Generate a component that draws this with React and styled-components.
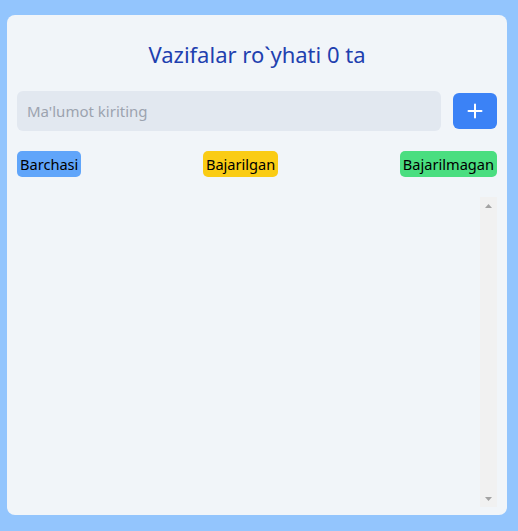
import React, { useState } from 'react';
import styled, { createGlobalStyle } from 'styled-components';

const GlobalStyle = createGlobalStyle`
  html, body {
    margin: 0;
    padding: 0;
    background: #93c5fd;
    font-family: "Noto Sans", "Open Sans", sans-serif;
  }
`;

const Page = styled.div`
  min-height: 531px;
  padding: 15px 11px 16px 7px;
  box-sizing: border-box;
`;

const Card = styled.div`
  background: #f1f5f9;
  border-radius: 8px;
  height: 500px;
  padding: 0 10px 8px 10px;
  box-sizing: border-box;
  display: flex;
  flex-direction: column;
`;

const Title = styled.h1`
  margin: 24px 0 22px;
  text-align: center;
  font-size: 22px;
  font-weight: 400;
  color: #1e40af;
  line-height: 30px;
`;

const InputRow = styled.form`
  display: flex;
  align-items: center;
  gap: 12px;
`;

const Input = styled.input`
  flex: 1;
  height: 40px;
  border: none;
  border-radius: 6px;
  background: #e2e8f0;
  padding: 0 10px;
  font-family: inherit;
  font-size: 15px;
  color: #1f2937;
  outline: none;
  &::placeholder {
    color: #9ca3af;
  }
`;

const AddButton = styled.button`
  width: 44px;
  height: 36px;
  border: none;
  border-radius: 6px;
  background: #3b82f6;
  display: flex;
  align-items: center;
  justify-content: center;
  cursor: pointer;
  padding: 0;
`;

const Filters = styled.div`
  display: flex;
  justify-content: space-between;
  margin-top: 20px;
`;

const FilterButton = styled.button`
  background: ${p => p.$bg};
  border: none;
  border-radius: 5px;
  height: 26px;
  padding: 0 3px;
  font-family: inherit;
  font-size: 14.6px;
  color: #000;
  cursor: pointer;
`;

const ListArea = styled.div`
  flex: 1;
  display: flex;
  margin-top: 20px;
  min-height: 0;
`;

const List = styled.ul`
  flex: 1;
  margin: 0;
  padding: 0;
  list-style: none;
  overflow-y: auto;
`;

const ScrollTrack = styled.div`
  width: 17px;
  background: #f1f1f1;
  display: flex;
  flex-direction: column;
  justify-content: space-between;
  align-items: center;
`;

const Arrow = styled.div`
  height: 17px;
  display: flex;
  align-items: center;
  justify-content: center;
`;

const PlusIcon = () => (
  <svg width="16" height="16" viewBox="0 0 16 16">
    <path d="M8 1.5v13M1.5 8h13" stroke="#fff" strokeWidth="2" strokeLinecap="round" />
  </svg>
);

const ArrowIcon = ({ down }) => (
  <svg width="7" height="4" viewBox="0 0 7 4">
    <polygon points={down ? '0,0 7,0 3.5,4' : '3.5,0 7,4 0,4'} fill="#a3a3a3" />
  </svg>
);

export default function App() {
  const [todos] = useState([]);
  const filters = [
    { label: 'Barchasi', bg: '#60a5fa' },
    { label: 'Bajarilgan', bg: '#facc15' },
    { label: 'Bajarilmagan', bg: '#4ade80' },
  ];

  return (
    <Page>
      <GlobalStyle />
      <Card>
        <Title>Vazifalar ro`yhati {todos.length} ta</Title>
        <InputRow onSubmit={e => e.preventDefault()}>
          <Input placeholder="Ma'lumot kiriting" />
          <AddButton type="submit"><PlusIcon /></AddButton>
        </InputRow>
        <Filters>
          {filters.map(f => (
            <FilterButton key={f.label} $bg={f.bg}>{f.label}</FilterButton>
          ))}
        </Filters>
        <ListArea>
          <List>
            {todos.map(t => <li key={t.id}>{t.text}</li>)}
          </List>
          <ScrollTrack>
            <Arrow><ArrowIcon /></Arrow>
            <Arrow><ArrowIcon down /></Arrow>
          </ScrollTrack>
        </ListArea>
      </Card>
    </Page>
  );
}
